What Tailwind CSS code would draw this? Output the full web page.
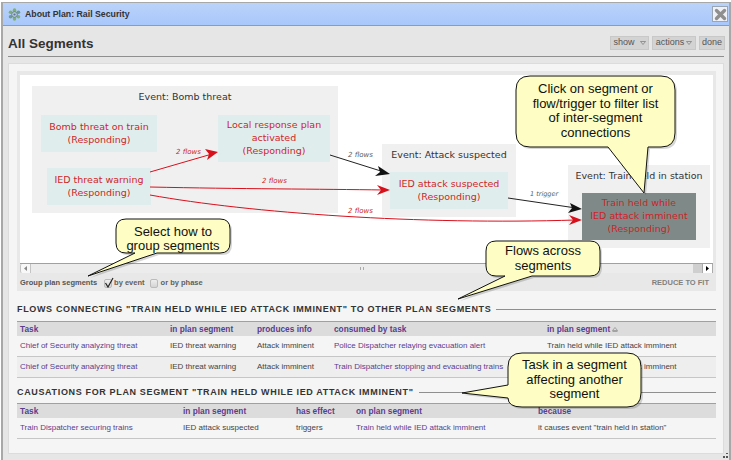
<!DOCTYPE html>
<html>
<head>
<meta charset="utf-8">
<script src="https://cdn.jsdelivr.net/npm/@tailwindcss/browser@4"></script>
</head>
<body class="bg-white">
<div class="relative w-[731px] h-[460px] overflow-hidden font-['Liberation_Sans',sans-serif] text-[#444]">
  <div class="ml-[1px] mt-[2px] w-[730px] h-[458px] border-x-2 border-t border-[#a8a8a8] bg-[#e6e6e6] flex flex-col">
    <!-- title bar -->
    <div class="h-[23px] shrink-0 flex items-center pl-[5px] pr-[1px] bg-gradient-to-b from-[#bbd3fa] to-[#a8c7fb] border-b border-[#8e9bb0]">
      <svg class="w-[13px] h-[13px]" viewBox="0 0 14 14" fill="none">
        <g fill="#7fae7c">
          <ellipse cx="7" cy="2.4" rx="1.9" ry="2.2"/><ellipse cx="7" cy="11.6" rx="1.9" ry="2.2"/>
          <ellipse cx="2.8" cy="4.6" rx="2" ry="1.9"/><ellipse cx="11.2" cy="9.4" rx="2" ry="1.9"/>
        </g>
        <g fill="#6c9a96">
          <ellipse cx="11.2" cy="4.6" rx="2" ry="1.9"/><ellipse cx="2.8" cy="9.4" rx="2" ry="1.9"/>
        </g>
        <circle cx="7" cy="7" r="3.1" fill="#b4c9d8" stroke="#55797a" stroke-width="0.9"/>
        <circle cx="7" cy="7" r="1.2" fill="#5f6fa0"/>
      </svg>
      <span class="ml-[4px] mt-[1px] text-[8.75px] font-bold text-[#333]">About Plan: Rail Security</span>
      <div class="ml-auto w-[16px] h-[16px] border border-[#9aa6b4] bg-[#eef2f8] flex items-center justify-center">
        <svg class="w-[13px] h-[13px]" viewBox="0 0 13 13"><path d="M2.5 2.5 L10.5 10.5 M10.5 2.5 L2.5 10.5" stroke="#8f8f8f" stroke-width="3.4" stroke-linecap="round"/></svg>
      </div>
    </div>
    <!-- heading -->
    <div class="h-[31px] shrink-0 ml-[5px] flex items-end justify-between border-b border-[#8f8f8f] w-[716px] pb-[2px]">
      <h1 class="text-[13.5px] leading-[20px] font-bold text-[#333]">All Segments</h1>
      <div class="flex gap-[3px] text-[9px] text-[#555] items-center mr-[-1px] mb-[4px]">
        <span class="h-[14px] w-[39px] bg-[#d3d3d3] border border-[#c8c8c8] flex items-center justify-center gap-[5px]">show<svg class="w-[6px] h-[4px]" viewBox="0 0 6 4"><path d="M0.5 0.5H5.5L3 3.5Z" fill="none" stroke="#777" stroke-width="0.7"/></svg></span>
        <span class="h-[14px] w-[44px] bg-[#d3d3d3] border border-[#c8c8c8] flex items-center justify-center gap-[2px]">actions<svg class="w-[6px] h-[4px]" viewBox="0 0 6 4"><path d="M0.5 0.5H5.5L3 3.5Z" fill="none" stroke="#777" stroke-width="0.7"/></svg></span>
        <span class="h-[14px] w-[26px] bg-[#d3d3d3] border border-[#c8c8c8] flex items-center justify-center">done</span>
      </div>
    </div>
    <!-- panel -->
    <div class="mt-[6px] ml-[5px] w-[716px] h-[391px] shrink-0 bg-[#f5f5f5] border border-[#dcdcdc] pt-[7px] px-[8px]">
      <!-- diagram block -->
      <div class="w-[699px] bg-[#e8e8e8] pt-[4px] px-[3px]">
        <div class="relative w-[693px] h-[188px] bg-white overflow-hidden text-[9.5px] leading-[13px] font-['DejaVu_Sans',sans-serif] text-center text-[#d01f28]">
          <div class="absolute left-[12px] top-[11px] w-[306px] h-[127px] bg-[#f0f0f0] text-[#333] pt-[4px]">Event: Bomb threat</div>
          <div class="absolute left-[21px] top-[40px] w-[116px] h-[37px] pb-[2px] bg-[#e0eded] flex items-center justify-center">Bomb threat on train<br>(Responding)</div>
          <div class="absolute left-[198px] top-[40px] w-[112px] h-[47px] pb-[2px] bg-[#e0eded] flex items-center justify-center">Local response plan<br>activated<br>(Responding)</div>
          <div class="absolute left-[27px] top-[93px] w-[104px] h-[37px] pb-[2px] bg-[#e0eded] flex items-center justify-center">IED threat warning<br>(Responding)</div>
          <div class="absolute left-[362px] top-[69px] w-[134px] h-[73px] bg-[#f0f0f0] text-[#333] pt-[4px]">Event: Attack suspected</div>
          <div class="absolute left-[370px] top-[97px] w-[118px] h-[37px] pb-[2px] bg-[#e0eded] flex items-center justify-center">IED attack suspected<br>(Responding)</div>
          <div class="absolute left-[548px] top-[90px] w-[142px] h-[83px] bg-[#f0f0f0] text-[#333] pt-[4px]">Event: Train held in station</div>
          <div class="absolute left-[562px] top-[118px] w-[114px] h-[47px] pb-[2px] bg-[#7f8988] flex items-center justify-center">Train held while<br>IED attack imminent<br>(Responding)</div>
          <svg class="absolute left-0 top-0 w-[693px] h-[188px]" viewBox="0 0 693 188" fill="none">
            <path d="M130 97 L192 79" stroke="#d8101c" stroke-width="1"/><path d="M198 77 L185 74 L189 79 L187 85Z" fill="#d8101c"/>
            <path d="M310 80 L364 97" stroke="#222" stroke-width="1"/><path d="M370 99 L358 91 L360 97 L355 101Z" fill="#111"/>
            <path d="M130 112 C220 114 300 114 364 115" stroke="#d8101c" stroke-width="1"/><path d="M370 115 L357 110 L361 115 L357 120Z" fill="#d8101c"/>
            <path d="M130 120 C230 138 400 150 556 145" stroke="#d8101c" stroke-width="1"/><path d="M562 145 L549 140 L553 145 L549 150Z" fill="#d8101c"/>
            <path d="M488 123 L556 133" stroke="#222" stroke-width="1"/><path d="M562 134 L550 128 L552 133 L548 138Z" fill="#111"/>
          </svg>
          <span class="absolute left-[156px] top-[73px] text-[7px] leading-[9px] italic text-[#c81f2a]">2 flows</span>
          <span class="absolute left-[328px] top-[76px] text-[7px] leading-[9px] italic text-[#4c6268]">2 flows</span>
          <span class="absolute left-[242px] top-[102px] text-[7px] leading-[9px] italic text-[#c81f2a]">2 flows</span>
          <span class="absolute left-[328px] top-[132px] text-[7px] leading-[9px] italic text-[#c81f2a]">2 flows</span>
          <span class="absolute left-[510px] top-[115px] text-[6.5px] leading-[9px] italic text-[#4c6268]">1 trigger</span>
        </div>
        <!-- scrollbar -->
        <div class="w-[693px] h-[10px] flex items-stretch border-t border-[#a0a0a0] bg-[#e3e3e3]">
          <div class="w-[11px] bg-[#f8f8f8] border-x border-[#c4c4c4] rounded-l-[2px] flex items-center justify-center"><svg class="w-[3px] h-[5px]" viewBox="0 0 3 5"><path d="M3 0V5L0 2.5Z" fill="#888"/></svg></div>
          <div class="grow bg-[#ececec] flex items-center justify-center"><div class="w-[4px] h-[3px] border-x border-[#aaa]"></div></div>
          <div class="w-[9px] bg-[#cfcfcf]"></div>
          <div class="w-[11px] bg-white border-x border-[#aaa] flex items-center justify-center"><svg class="w-[3px] h-[5px]" viewBox="0 0 3 5"><path d="M0 0V5L3 2.5Z" fill="#000"/></svg></div>
        </div>
        <!-- controls -->
        <div class="h-[18px] pt-[2px] flex items-center text-[7.5px] font-bold text-[#5f5f5f]">
          <span class="text-[#555]">Group plan segments</span>
          <span class="ml-[7px] w-[8px] h-[9px] rounded-[2px] border border-[#bbb] bg-gradient-to-b from-[#eee] to-[#d4d4d4] relative"><svg class="absolute left-[-1px] top-[-3px] w-[10px] h-[11px]" viewBox="0 0 10 11"><path d="M1.5 6 L4 10 L9 1" fill="none" stroke="#222" stroke-width="1.2"/></svg></span>
          <span class="ml-[2px]">by event</span>
          <span class="ml-[5px] w-[8px] h-[9px] rounded-[2px] border border-[#bbb] bg-gradient-to-b from-[#eee] to-[#d4d4d4]"></span>
          <span class="ml-[3px]">or by phase</span>
          <span class="ml-auto mr-[4px] text-[#808080]">REDUCE TO FIT</span>
        </div>
      </div>
      <!-- flows -->
      <div class="w-[699px] mt-[13px] flex items-center gap-[5px]">
        <h2 class="text-[9px] leading-[11px] font-bold text-[#333] tracking-[0.65px] whitespace-nowrap">FLOWS CONNECTING "TRAIN HELD WHILE IED ATTACK IMMINENT" TO OTHER PLAN SEGMENTS</h2>
        <div class="grow border-t border-[#8f8f8f]"></div>
      </div>
      <div class="w-[699px] mt-[6px] border-t border-[#a0a0a0] text-[8px] leading-[20px]">
        <div class="grid grid-cols-[150px_87px_77px_213px_1fr] h-[14px] items-center bg-[#dcdcdc] font-bold text-[8.3px] text-[#5a3d8e] leading-[14px] pl-[3px]">
          <span>Task</span><span>in plan segment</span><span>produces info</span><span>consumed by task</span>
          <span class="flex items-center gap-[2px]">in plan segment <svg class="w-[6px] h-[5px]" viewBox="0 0 6 5"><path d="M0.5 3.5H5.5L3 0.5Z M0.5 4.5H5.5" fill="none" stroke="#888" stroke-width="0.7"/></svg></span>
        </div>
        <div class="grid grid-cols-[150px_87px_77px_213px_1fr] h-[21px] items-center bg-[#f5f5f5] border-b border-[#c6c6c6] pl-[3px]">
          <span class="text-[#5a3d8e]">Chief of Security analyzing threat</span><span>IED threat warning</span><span>Attack imminent</span><span class="text-[#5a3d8e]">Police Dispatcher relaying evacuation alert</span><span>Train held while IED attack imminent</span>
        </div>
        <div class="grid grid-cols-[150px_87px_77px_213px_1fr] h-[21px] items-center bg-[#eeeeee] border-b border-[#c6c6c6] pl-[3px]">
          <span class="text-[#5a3d8e]">Chief of Security analyzing threat</span><span>IED threat warning</span><span>Attack imminent</span><span class="text-[#5a3d8e] whitespace-nowrap">Train Dispatcher stopping and evacuating trains</span><span>Train held while IED attack imminent</span>
        </div>
      </div>
      <!-- causations -->
      <div class="w-[699px] mt-[9px] flex items-center gap-[5px]">
        <h2 class="text-[9px] leading-[11px] font-bold text-[#333] tracking-[0.65px] whitespace-nowrap">CAUSATIONS FOR PLAN SEGMENT "TRAIN HELD WHILE IED ATTACK IMMINENT"</h2>
        <div class="grow border-t border-[#8f8f8f]"></div>
      </div>
      <div class="w-[699px] mt-[5px] border-t border-[#a0a0a0] text-[8px] leading-[20px]">
        <div class="grid grid-cols-[163px_113px_60px_182px_1fr] h-[14px] items-center bg-[#dcdcdc] font-bold text-[8.3px] text-[#5a3d8e] leading-[14px] pl-[3px]">
          <span>Task</span><span>in plan segment</span><span>has effect</span><span>on plan segment</span><span>because</span>
        </div>
        <div class="grid grid-cols-[163px_113px_60px_182px_1fr] h-[21px] items-center bg-[#f5f5f5] border-b border-[#c6c6c6] pl-[3px]">
          <span class="text-[#5a3d8e]">Train Dispatcher securing trains</span><span>IED attack suspected</span><span>triggers</span><span class="text-[#5a3d8e]">Train held while IED attack imminent</span><span>it causes event "train held in station"</span>
        </div>
      </div>
    </div>
  </div>

  <!-- callouts -->
  <svg class="absolute left-0 top-0 w-[731px] h-[460px] pointer-events-none" viewBox="0 0 731 460">
    <g fill="#000" fill-opacity="0.16" transform="translate(2 2)">
      <path d="M530 76H661Q675 76 675 90V133Q675 147 661 147H648L644 193L608 147H530Q516 147 516 133V90Q516 76 530 76Z"/>
      <path d="M126 219H220Q230 219 230 229V243Q230 253 220 253H157L88 276L135 253H126Q116 253 116 243V229Q116 219 126 219Z"/>
      <path d="M496 241H590Q600 241 600 251V266Q600 276 590 276H532L458 299L505 276H496Q486 276 486 266V251Q486 241 496 241Z"/>
      <path d="M522 353H627Q641 353 641 367V393Q641 407 627 407H522Q508 407 508 398L462 393L508 385V367Q508 353 522 353Z"/>
    </g>
    <g fill="#fdfdc4" stroke="#111" stroke-width="1">
      <path d="M530 76H661Q675 76 675 90V133Q675 147 661 147H648L644 193L608 147H530Q516 147 516 133V90Q516 76 530 76Z"/>
      <path d="M126 219H220Q230 219 230 229V243Q230 253 220 253H157L88 276L135 253H126Q116 253 116 243V229Q116 219 126 219Z"/>
      <path d="M496 241H590Q600 241 600 251V266Q600 276 590 276H532L458 299L505 276H496Q486 276 486 266V251Q486 241 496 241Z"/>
      <path d="M522 353H627Q641 353 641 367V393Q641 407 627 407H522Q508 407 508 398L462 393L508 385V367Q508 353 522 353Z"/>
    </g>
  </svg>
  <div class="absolute left-[516px] top-[82px] w-[159px] text-center text-[13px] leading-[14.5px] text-[#111]">Click on segment or<br>flow/trigger to filter list<br>of inter-segment<br>connections</div>
  <div class="absolute left-[116px] top-[225px] w-[114px] text-center text-[13px] leading-[13.5px] text-[#111]">Select how to<br>group segments</div>
  <div class="absolute left-[486px] top-[244px] w-[114px] text-center text-[13px] leading-[14.5px] text-[#111]">Flows across<br>segments</div>
  <div class="absolute left-[508px] top-[358px] w-[133px] text-center text-[13px] leading-[14.5px] text-[#111]">Task in a segment<br>affecting another<br>segment</div>
  <svg class="absolute left-[723px] top-[453px] w-[5px] h-[5px]" viewBox="0 0 5 5"><path d="M3 0h2v1H3z M0 3h2v2H0z M3 3h2v2H3z" fill="#555"/></svg>
</div>
</body>
</html>
